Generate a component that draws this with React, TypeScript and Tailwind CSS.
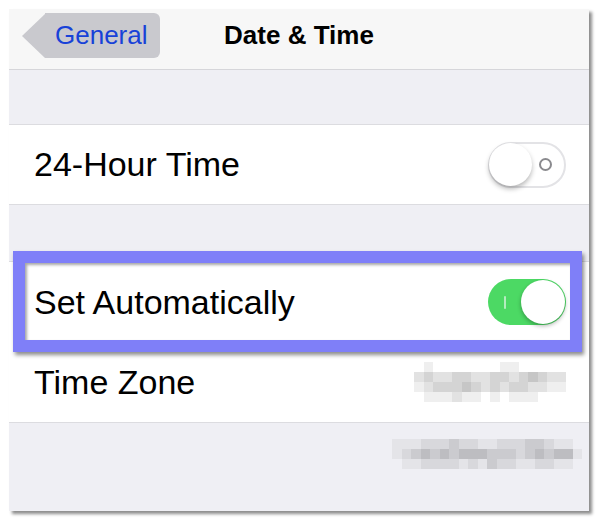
const tzPattern = ['0100000001100000', '2322332233234322', '1233343232332211', '0111211010111000'];
const footPattern = ['11122232211222332110', '12343434443332343441', '01122221213221122110'];

const whiteShades: Record<string, string> = {
  '0': 'bg-transparent',
  '1': 'bg-[#efefef]',
  '2': 'bg-[#e2e2e2]',
  '3': 'bg-[#d4d4d4]',
  '4': 'bg-[#c6c6c6]',
};

const grayShades: Record<string, string> = {
  '0': 'bg-transparent',
  '1': 'bg-[#e4e4e8]',
  '2': 'bg-[#d8d8dc]',
  '3': 'bg-[#cbcbcf]',
  '4': 'bg-[#bdbdc1]',
};

function Mosaic({ rows, shades, cell }: { rows: string[]; shades: Record<string, string>; cell: string }) {
  return (
    <div className="flex flex-col">
      {rows.map((row, i) => (
        <div key={i} className="flex">
          {row.split('').map((c, j) => (
            <span key={j} className={`${cell} ${shades[c]}`} />
          ))}
        </div>
      ))}
    </div>
  );
}

function Switch({ on }: { on: boolean }) {
  if (on) {
    return (
      <div className="flex h-[46px] w-[78px] items-center justify-between rounded-full bg-[#4cd964] pl-[16px] pr-[1px]">
        <span className="h-[13px] w-[2px] rounded-full bg-[#b4ecbf]" />
        <span className="h-[44px] w-[44px] rounded-full bg-white shadow-[0_2px_4px_rgba(0,0,0,0.3)]" />
      </div>
    );
  }
  return (
    <div className="flex h-[46px] w-[78px] items-center justify-between rounded-full border-2 border-[#e3e3e6] bg-white pr-[12px]">
      <span className="-ml-[1px] h-[43px] w-[43px] rounded-full bg-white shadow-[0_3px_5px_rgba(0,0,0,0.28)]" />
      <span className="h-[13px] w-[13px] rounded-full border-[2.5px] border-[#8a8a8e]" />
    </div>
  );
}

export default function App() {
  return (
    <div className="h-[522px] w-[600px] bg-white pl-[9px] pt-[9px] font-['Liberation_Sans',Arial,sans-serif]">
      <div className="flex h-[502px] w-[580px] flex-col bg-[#efeff4] shadow-[3px_3px_3px_rgba(0,0,0,0.45)]">
        {/* Nav bar */}
        <div className="grid h-[61px] grid-cols-[1fr_auto_1fr] items-center border-b border-[#d6d6da] bg-[#f7f7f7] pb-[7px]">
          <div className="flex items-center pl-[13px]">
            <span className="h-0 w-0 border-y-[22.5px] border-r-[23px] border-y-transparent border-r-[#c9c9ce]" />
            <span className="flex h-[45px] items-center rounded-r-[6px] bg-[#c9c9ce] pl-[10px] pr-[12px] text-[26px] text-[#1842d8]">
              General
            </span>
          </div>
          <div className="text-[26px] font-bold text-black">Date &amp; Time</div>
          <div />
        </div>

        <div className="h-[54px]" />

        <div className="flex h-[81px] items-center justify-between border-y border-[#dcdce0] bg-white pl-[25px] pr-[23px]">
          <span className="text-[34px] text-black">24-Hour Time</span>
          <Switch on={false} />
        </div>

        <div className="h-[56px]" />

        <div className="relative flex h-[81px] items-center justify-between border-t border-[#dcdce0] bg-white pl-[25px] pr-[23px]">
          <span className="text-[34px] text-black">Set Automatically</span>
          <Switch on />
          {/* highlight annotation */}
          <div className="pointer-events-none absolute -bottom-[10px] -top-[11px] left-[4px] right-[7px] border-[12px] border-[#7f7ff8] shadow-[2px_3px_4px_rgba(0,0,0,0.45),inset_2px_2px_3px_rgba(0,0,0,0.35)]" />
        </div>

        <div className="flex h-[81px] items-center justify-between border-b border-[#dcdce0] bg-white pl-[25px] pr-[23px]">
          <span className="text-[34px] text-black">Time Zone</span>
          <Mosaic rows={tzPattern} shades={whiteShades} cell="h-[10px] w-[9.5px]" />
        </div>

        <div className="flex flex-1 justify-end pr-[7px] pt-[16px]">
          <Mosaic rows={footPattern} shades={grayShades} cell="h-[10px] w-[9.5px]" />
        </div>
      </div>
    </div>
  );
}
